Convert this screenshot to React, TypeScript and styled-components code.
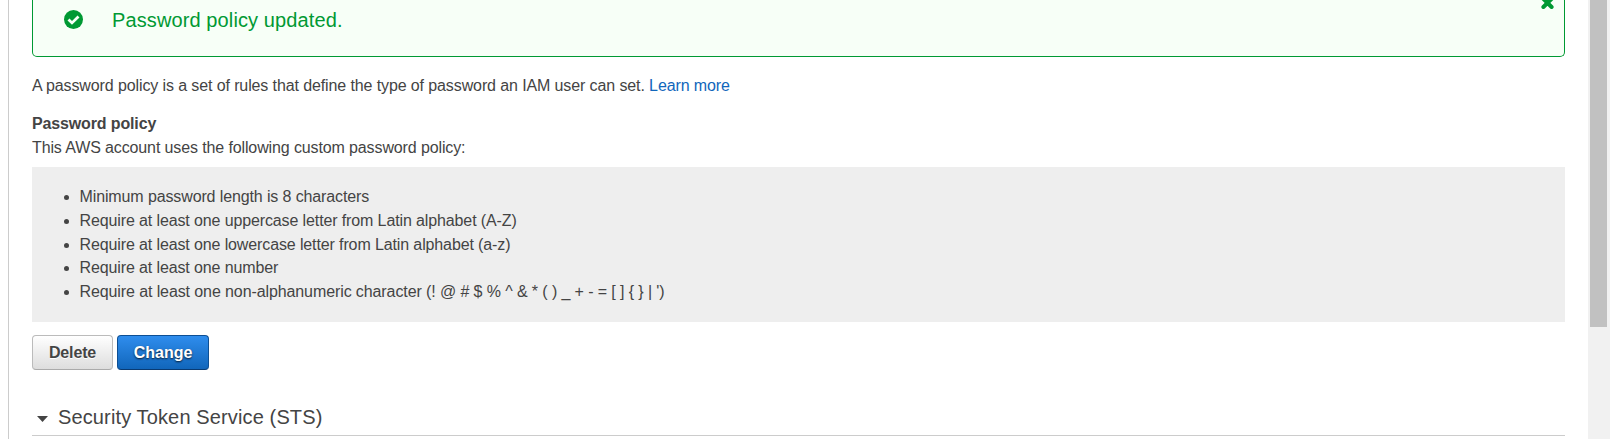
import React from "react";
import styled, { createGlobalStyle } from "styled-components";

const GlobalStyle = createGlobalStyle`
  * { box-sizing: border-box; }
  body {
    margin: 0;
    overflow: hidden;
    background: #fff;
    color: #444;
    font: 16px/23.75px "Liberation Sans", Arial, sans-serif;
    letter-spacing: -0.12px;
  }
`;

const Page = styled.div`
  display: flex;
  height: 439px;
  padding-left: 8px;
  overflow: hidden;
`;

const Content = styled.main`
  flex: 1;
  border-left: 1px solid #ccc;
  padding: 0 23px;
`;

const Banner = styled.div`
  display: flex;
  align-items: flex-start;
  height: 57px;
  padding: 0 10px 0 31px;
  border: 1px solid #093;
  border-top: 0;
  border-radius: 0 0 5px 5px;
  background: #f7fff7;
  color: #093;
`;

const CheckIcon = styled.svg`
  width: 19px;
  height: 19px;
  margin-top: 10px;
`;

const BannerText = styled.div`
  flex: 1;
  margin: 8px 0 0 29px;
  font-size: 20px;
  line-height: 24px;
  letter-spacing: 0.11px;
`;

const CloseIcon = styled.svg`
  width: 13px;
  height: 9px;
`;

const Paragraph = styled.p`
  margin: 17px 0 14px;
  line-height: 24px;
  letter-spacing: -0.11px;
`;

const Link = styled.a`
  color: #1166bb;
  text-decoration: none;
`;

const Subheading = styled.h3`
  margin: 0;
  font-size: 16px;
  line-height: 24px;
  letter-spacing: -0.14px;
`;

const Note = styled.p`
  margin: 0 0 7px;
  line-height: 24px;
`;

const PolicyList = styled.ul`
  height: 155px;
  margin: 0;
  padding: 18px 0 0 47.5px;
  background: #eee;
`;

const Rule = styled.li`
  &:last-child { letter-spacing: -0.1px; }
`;

const Actions = styled.div`
  display: flex;
  gap: 4px;
  margin-top: 13px;
`;

const Button = styled.button<{ $primary?: boolean }>`
  width: ${(p) => (p.$primary ? 92 : 81)}px;
  height: 35px;
  padding: 1px 0 0;
  border: 1px solid ${(p) => (p.$primary ? "#0d4f94" : "#bbb")};
  border-bottom-color: ${(p) => (p.$primary ? "#093b73" : "#aaa")};
  border-radius: 4px;
  background: ${(p) =>
    p.$primary
      ? "linear-gradient(#2f8ded, #1166bb)"
      : "linear-gradient(#fff, #ddd)"};
  color: ${(p) => (p.$primary ? "#fff" : "#444")};
  font: bold 16px "Liberation Sans", Arial, sans-serif;
  letter-spacing: ${(p) => (p.$primary ? 0 : -0.15)}px;
  text-shadow: ${(p) => (p.$primary ? "0 1px 2px #000c" : "0 1px 0 #fff")};
`;

const Section = styled.h2`
  display: flex;
  align-items: center;
  height: 36px;
  margin: 30px 0 0;
  padding-left: 5px;
  border-bottom: 1px solid #ccc;
  font-size: 20px;
  font-weight: normal;
  letter-spacing: 0.13px;
`;

const Caret = styled.svg`
  width: 11px;
  height: 6px;
  margin: 3px 10px 0 0;
`;

const ScrollTrack = styled.div`
  width: 22px;
  padding: 0 3px 0 2px;
  background: #f1f1f1;
`;

const ScrollThumb = styled.div`
  height: 327px;
  background: #c1c1c1;
`;

const rules = [
  "Minimum password length is 8 characters",
  "Require at least one uppercase letter from Latin alphabet (A-Z)",
  "Require at least one lowercase letter from Latin alphabet (a-z)",
  "Require at least one number",
  "Require at least one non-alphanumeric character (! @ # $ % ^ & * ( ) _ + - = [ ] { } | ')",
];

export default function App() {
  return (
    <Page>
      <GlobalStyle />
      <Content>
        <Banner>
          <CheckIcon viewBox="0 0 19 19">
            <circle cx="9.5" cy="9.5" r="9.5" fill="#093" />
            <path d="M4.5 9.4 8 12.9l6.5-6.4" fill="none" stroke="#f7fff7" strokeWidth="2.8" />
          </CheckIcon>
          <BannerText>Password policy updated.</BannerText>
          <CloseIcon viewBox="0 0 13 9">
            <path
              d="M2.4 7 10.6-1.2M10.6 7 2.4-1.2"
              stroke="#093"
              strokeWidth="4"
              strokeLinecap="round"
            />
          </CloseIcon>
        </Banner>
        <Paragraph>
          A password policy is a set of rules that define the type of password an
          IAM user can set. <Link>Learn more</Link>
        </Paragraph>
        <Subheading>Password policy</Subheading>
        <Note>This AWS account uses the following custom password policy:</Note>
        <PolicyList>
          {rules.map((rule) => (
            <Rule key={rule}>{rule}</Rule>
          ))}
        </PolicyList>
        <Actions>
          <Button>Delete</Button>
          <Button $primary>Change</Button>
        </Actions>
        <Section>
          <Caret viewBox="0 0 11 6">
            <path d="M0 0h11L5.5 6z" fill="#444" />
          </Caret>
          Security Token Service (STS)
        </Section>
      </Content>
      <ScrollTrack>
        <ScrollThumb />
      </ScrollTrack>
    </Page>
  );
}
